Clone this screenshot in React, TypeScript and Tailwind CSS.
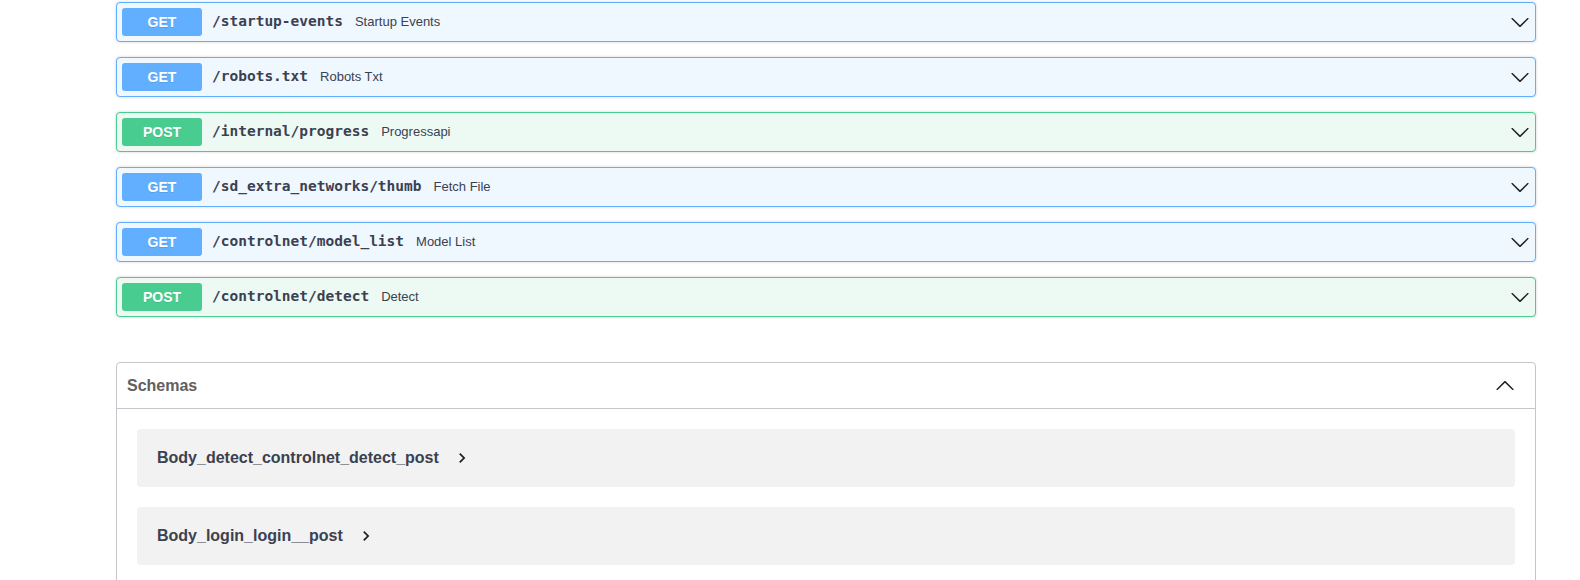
import React from "react";

type Op = { method: "GET" | "POST"; path: string; summary: string };

const OPS: Op[] = [
  { method: "GET", path: "/startup-events", summary: "Startup Events" },
  { method: "GET", path: "/robots.txt", summary: "Robots Txt" },
  { method: "POST", path: "/internal/progress", summary: "Progressapi" },
  { method: "GET", path: "/sd_extra_networks/thumb", summary: "Fetch File" },
  { method: "GET", path: "/controlnet/model_list", summary: "Model List" },
  { method: "POST", path: "/controlnet/detect", summary: "Detect" },
];

const SCHEMAS = ["Body_detect_controlnet_detect_post", "Body_login_login__post"];

function Arrow({ up = false }: { up?: boolean }) {
  return (
    <svg
      width="20"
      height="20"
      viewBox="0 0 20 20"
      className={up ? "rotate-180 shrink-0" : "shrink-0"}
      aria-hidden
    >
      <path
        d="M17.418 6.109c.272-.268.709-.268.979 0s.271.701 0 .969l-7.908 7.83c-.27.268-.707.268-.979 0l-7.908-7.83c-.27-.268-.27-.701 0-.969.271-.268.709-.268.979 0L10 13.25l7.418-7.141z"
        fill="#1f1f1f"
      />
    </svg>
  );
}

function ModelToggle() {
  return (
    <svg width="20" height="20" viewBox="0 0 24 24" className="shrink-0" aria-hidden>
      <path d="M10 6L8.59 7.41 13.17 12l-4.58 4.59L10 18l6-6z" fill="#1f1f1f" />
    </svg>
  );
}

function OpBlock({ op }: { op: Op }) {
  const isGet = op.method === "GET";
  return (
    <div
      className={
        isGet
          ? "mb-[15px] rounded-[4px] border border-[#61affe] bg-[#eff7ff] shadow-[0_0_3px_rgba(0,0,0,0.19)]"
          : "mb-[15px] rounded-[4px] border border-[#49cc90] bg-[#edfaf4] shadow-[0_0_3px_rgba(0,0,0,0.19)]"
      }
    >
      <div className="flex items-center p-[5px]">
        <span
          className={
            isGet
              ? "flex h-[28px] w-[80px] shrink-0 items-center justify-center rounded-[3px] bg-[#61affe] text-[14px] font-bold text-white [text-shadow:0_1px_0_rgba(0,0,0,0.1)]"
              : "flex h-[28px] w-[80px] shrink-0 items-center justify-center rounded-[3px] bg-[#49cc90] text-[14px] font-bold text-white [text-shadow:0_1px_0_rgba(0,0,0,0.1)]"
          }
        >
          {op.method}
        </span>
        <span className="pl-[10px] pr-[12px] font-['DejaVu_Sans_Mono',monospace] text-[14.5px] font-bold text-[#3b4151]">
          {op.path}
        </span>
        <span className="flex-1 text-[13px] text-[#3b4151]">{op.summary}</span>
        <Arrow />
      </div>
    </div>
  );
}

export default function App() {
  return (
    <div className="h-[580px] overflow-hidden bg-white font-['Liberation_Sans',Arial,sans-serif]">
      <div className="ml-[116px] w-[1420px] pt-[2px]">
        {OPS.map((op) => (
          <OpBlock key={op.path} op={op} />
        ))}

        {/* Schemas */}
        <section className="mt-[45px] min-h-[300px] rounded-[4px] border border-[#c4c6cb]">
          <div className="flex h-[46px] items-center justify-between border-b border-[#c4c6cb] pl-[10px] pr-[20px]">
            <h4 className="text-[16px] font-bold text-[#606060]">Schemas</h4>
            <Arrow up />
          </div>
          <div className="flex flex-col gap-[20px] p-[20px]">
            {SCHEMAS.map((name) => (
              <div
                key={name}
                className="flex h-[58px] items-center rounded-[4px] bg-[#f2f2f2] px-[20px]"
              >
                <span className="text-[16px] font-bold text-[#3b4151]">{name}</span>
                <span className="ml-[13px] flex">
                  <ModelToggle />
                </span>
              </div>
            ))}
          </div>
        </section>
      </div>
    </div>
  );
}
